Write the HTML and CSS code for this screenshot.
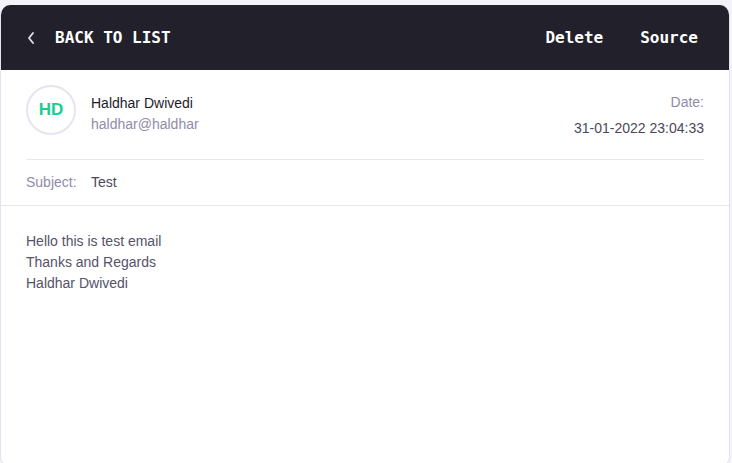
FILE: index.html
```html
<!DOCTYPE html>
<html lang="en">
<head>
<meta charset="utf-8">
<title>Email</title>
<link rel="stylesheet" href="styles.css">
</head>
<body>
<div class="card">
  <header class="topbar">
    <a class="back" href="#">
      <svg class="chev" width="10" height="14" viewBox="0 0 10 14"><path d="M7 2 L3 7 L7 12" fill="none" stroke="#d8d7e2" stroke-width="2" stroke-linecap="round" stroke-linejoin="round"/></svg>
      <span>BACK TO LIST</span>
    </a>
    <nav class="actions">
      <a href="#">Delete</a>
      <a href="#">Source</a>
    </nav>
  </header>
  <section class="meta">
    <div class="sender-row">
      <div class="sender">
        <div class="avatar">HD</div>
        <div class="who">
          <div class="name">Haldhar Dwivedi</div>
          <div class="email">haldhar@haldhar</div>
        </div>
      </div>
      <div class="date">
        <div class="date-label">Date:</div>
        <div class="date-value">31-01-2022 23:04:33</div>
      </div>
    </div>
    <div class="subject-row">
      <span class="subject-label">Subject:</span>
      <span class="subject-value">Test</span>
    </div>
  </section>
  <section class="body">
    <p>Hello this is test email<br>Thanks and Regards<br>Haldhar Dwivedi</p>
  </section>
</div>
</body>
</html>
```
FILE: styles.css
```css
* { box-sizing: border-box; }
html, body { margin: 0; padding: 0; }
body {
  background: #f4f3f9;
  font-family: "Liberation Sans", Arial, sans-serif;
  padding-top: 5px;
  overflow: hidden;
}
.card {
  width: 730px;
  height: 462px;
  background: #ffffff;
  border: 1px solid #e4e2f0;
  border-top: none;
  border-radius: 10px;
  overflow: hidden;
}
.topbar {
  height: 65px;
  background: #22212b;
  display: flex;
  align-items: center;
  justify-content: space-between;
  padding: 0 31px 0 25px;
  font-family: "DejaVu Sans Mono", monospace;
  font-weight: bold;
  font-size: 16px;
  color: #ffffff;
}
.topbar a { color: #ffffff; text-decoration: none; }
.back { display: flex; align-items: center; }
.chev { margin-right: 19px; }
.actions { display: flex; gap: 37px; }
.meta { padding: 15px 25px 0 25px; border-bottom: 1px solid #e8e6f1; }
.sender-row {
  display: flex;
  justify-content: space-between;
  padding-bottom: 23px;
  border-bottom: 1px solid #e8e6f1;
}
.sender { display: flex; align-items: flex-start; }
.avatar {
  width: 50px;
  height: 50px;
  border-radius: 50%;
  border: 2px solid #e6e4f1;
  display: flex;
  align-items: center;
  justify-content: center;
  color: #19cc92;
  font-weight: bold;
  font-size: 17px;
}
.who { margin-left: 15px; padding-top: 10px; font-size: 14px; }
.name { color: #1e1c2c; line-height: 16px; }
.email { color: #908ca8; line-height: 16px; margin-top: 5px; }
.date { text-align: right; font-size: 14px; padding-top: 9px; }
.date-label { color: #908ca8; line-height: 16px; }
.date-value { color: #4a4859; line-height: 16px; margin-top: 10px; }
.subject-row { height: 45px; display: flex; align-items: center; font-size: 14px; padding-bottom: 1px; }
.subject-label { color: #908ca8; width: 65px; }
.subject-value { color: #4a4859; }
.body { padding: 25px 25px; }
.body p { margin: 0; font-size: 14px; line-height: 21px; color: #55526a; }
```
